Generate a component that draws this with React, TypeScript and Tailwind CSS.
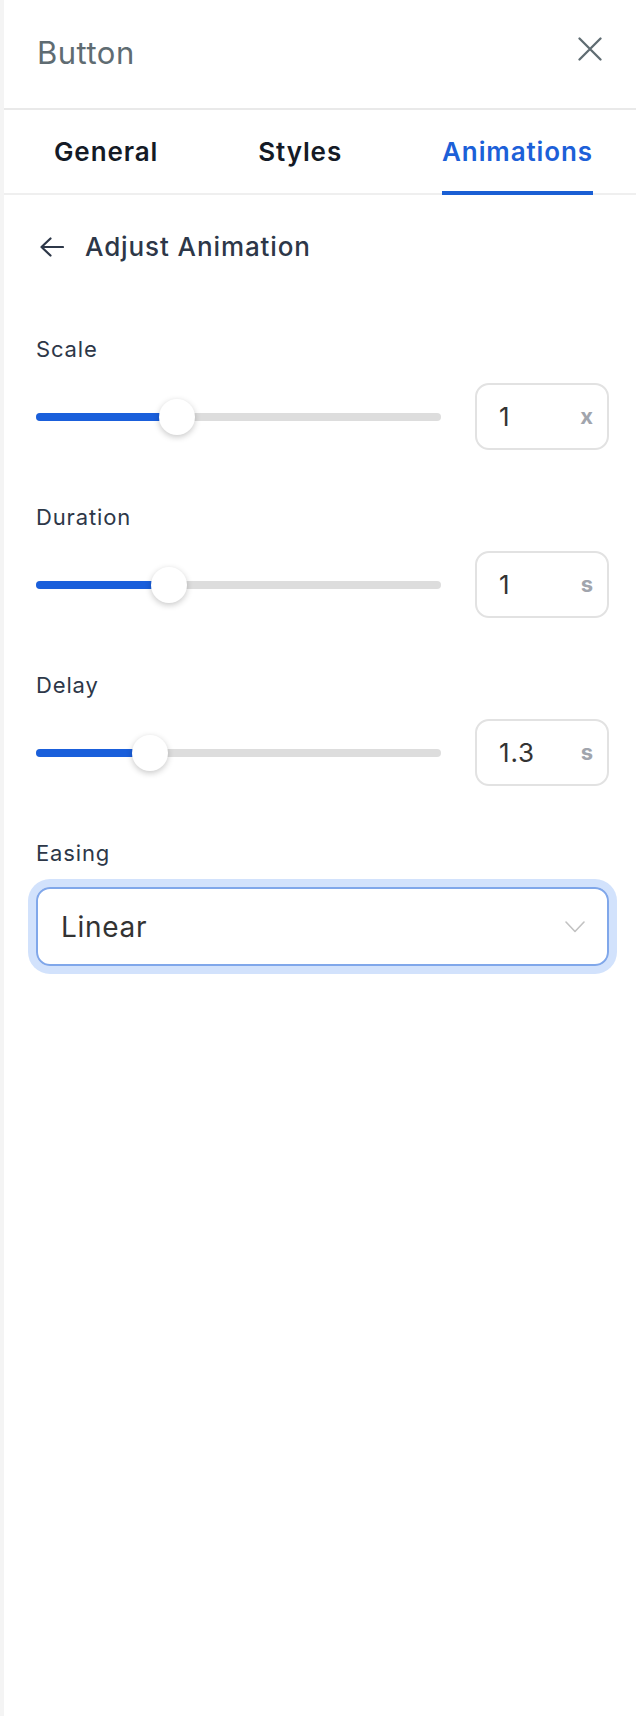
import type { JSX } from "react";

type SliderField = {
  label: string;
  value: number;
  min: number;
  max: number;
  unit: string;
};

const fields: SliderField[] = [
  { label: "Scale", value: 1, min: 0, max: 3, unit: "x" },
  { label: "Duration", value: 1, min: 0.1, max: 3, unit: "s" },
  { label: "Delay", value: 1.3, min: 0, max: 5, unit: "s" },
];

const tabs = ["General", "Styles", "Animations"];

function Slider({ field }: { field: SliderField }): JSX.Element {
  const pct = (field.value - field.min) / (field.max - field.min);
  const thumbLeft = `calc(${pct * 100}% - ${pct * 36}px)`;
  const fillWidth = `calc(${pct * 100}% - ${pct * 36}px + 18px)`;
  return (
    <div className="relative flex-1 h-[36px] flex items-center">
      <div className="w-full h-[8px] rounded-full bg-[#dddddd]" />
      <div
        className="absolute left-0 top-[14px] h-[8px] rounded-full bg-[#1a5fdb]"
        style={{ width: fillWidth }}
      />
      <div
        className="absolute top-0 w-[36px] h-[36px] rounded-full bg-white shadow-[0_2px_6px_rgba(0,0,0,0.22)]"
        style={{ left: thumbLeft }}
      />
    </div>
  );
}

export default function App(): JSX.Element {
  return (
    <div className="min-h-[1716px] bg-white border-l-4 border-[#f4f4f4] font-['Inter',sans-serif]">
      <div className="h-[110px] border-b-2 border-[#e9e9e9] flex justify-between pl-[33px] pr-[34px]">
        <h1 className="mt-[33px] text-[31px] leading-[40px] tracking-[0.5px] text-[#5f6c72]">Button</h1>
        <svg className="mt-[37px]" width="24" height="24" viewBox="0 0 24 24" fill="none">
          <path d="M1.5 1.5L22.5 22.5M22.5 1.5L1.5 22.5" stroke="#5f6c72" strokeWidth="2.3" strokeLinecap="round" />
        </svg>
      </div>

      <div className="border-b-2 border-[#efefef] flex justify-between pl-[50px] pr-[43px]">
        {tabs.map((tab) => {
          const active = tab === "Animations";
          return (
            <button
              key={tab}
              className={`pt-[26px] pb-[23px] -mb-[2px] border-b-4 text-[26px] leading-[32px] tracking-[0.9px] font-semibold ${
                active ? "border-[#1a5fd4] text-[#1c60d8]" : "border-transparent text-[#141a26]"
              }`}
            >
              {tab}
            </button>
          );
        })}
      </div>

      <div className="pl-[32px] pr-[27px]">
        <div className="mt-[36px] h-[32px] flex items-center gap-[21px]">
          <svg width="28" height="20" viewBox="0 0 28 20" fill="none">
            <path d="M27 10H5.5M14.5 1.5L5.5 10L14.5 18.5" stroke="#2d3748" strokeWidth="2.2" strokeLinecap="round" strokeLinejoin="round" />
          </svg>
          <span className="text-[26px] leading-[32px] tracking-[0.9px] font-medium text-[#2d3748]">Adjust Animation</span>
        </div>

        <div className="mt-[72px] flex flex-col gap-[53px]">
          {fields.map((field) => (
            <div key={field.label}>
              <p className="text-[22px] leading-[28px] tracking-[0.85px] text-[#2d3748]">{field.label}</p>
              <div className="mt-[20px] h-[67px] flex items-center gap-[34px]">
                <Slider field={field} />
                <div className="w-[134px] h-[67px] border-2 border-[#e2e2e2] rounded-[14px] flex items-center justify-between pl-[22px] pr-[14px]">
                  <span className="text-[26px] tracking-[0.8px] text-[#333333]">{field.value}</span>
                  <span className="text-[22px] font-bold text-[#a1a5ad]">{field.unit}</span>
                </div>
              </div>
            </div>
          ))}

          <div>
            <p className="text-[22px] leading-[28px] tracking-[0.85px] text-[#2d3748]">Easing</p>
            <div className="mt-[20px] h-[79px] border-2 border-[#80a7ea] rounded-[14px] ring-8 ring-[#d2e2fc] flex items-center justify-between pl-[23px] pr-[22px]">
              <span className="text-[28px] tracking-[0.7px] text-[#333333]">Linear</span>
              <svg width="20" height="12" viewBox="0 0 20 12" fill="none">
                <path d="M1 1L10 10.5L19 1" stroke="#c2c2c2" strokeWidth="1.6" strokeLinecap="round" strokeLinejoin="round" />
              </svg>
            </div>
          </div>
        </div>
      </div>
    </div>
  );
}
